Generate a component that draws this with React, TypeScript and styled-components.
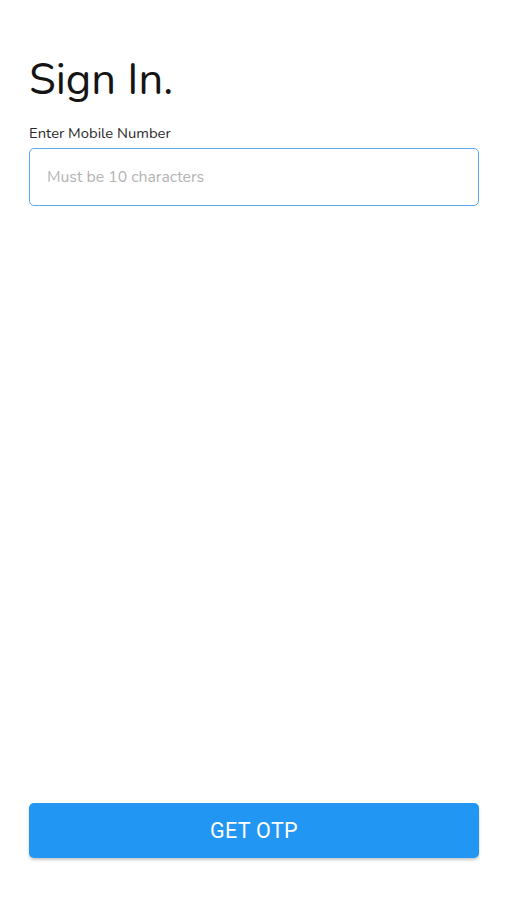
import styled, { createGlobalStyle } from "styled-components";

const GlobalStyle = createGlobalStyle`
  html, body {
    margin: 0;
    padding: 0;
    background: #ffffff;
  }
  * {
    box-sizing: border-box;
  }
`;

const Screen = styled.div`
  display: flex;
  flex-direction: column;
  min-height: 900px;
  padding: 52px 28px 42px 29px;
  font-family: "Nunito", "Noto Sans", sans-serif;
  color: #1a1a1a;
`;

const Title = styled.h1`
  margin: 0 0 16px 0;
  font-size: 43.5px;
  font-weight: 400;
  line-height: 56px;
  color: #141414;
`;

const Label = styled.label`
  display: block;
  font-size: 14.8px;
  line-height: 18px;
  color: #2a2a2a;
  margin-bottom: 6px;
`;

const Input = styled.input`
  width: 100%;
  height: 58px;
  border: 1.5px solid #5ba9f0;
  border-radius: 5px;
  padding: 0 17px;
  font-family: "Nunito", "Noto Sans", sans-serif;
  font-size: 15.8px;
  color: #222;
  outline: none;

  &::placeholder {
    color: #b3b3b3;
  }
`;

const Spacer = styled.div`
  flex: 1;
`;

const Button = styled.button`
  width: 100%;
  height: 55px;
  border: none;
  border-radius: 5px;
  background: #2196f3;
  color: #ffffff;
  font-family: "Roboto", "Liberation Sans", sans-serif;
  font-size: 21.5px;
  letter-spacing: 0.3px;
  box-shadow: 0 2px 3px rgba(0, 0, 0, 0.22);
  cursor: pointer;
`;

export default function App() {
  return (
    <>
      <GlobalStyle />
      <Screen>
        <Title>Sign In.</Title>
        <Label htmlFor="mobile">Enter Mobile Number</Label>
        <Input id="mobile" placeholder="Must be 10 characters" />
        <Spacer />
        <Button>GET OTP</Button>
      </Screen>
    </>
  );
}
